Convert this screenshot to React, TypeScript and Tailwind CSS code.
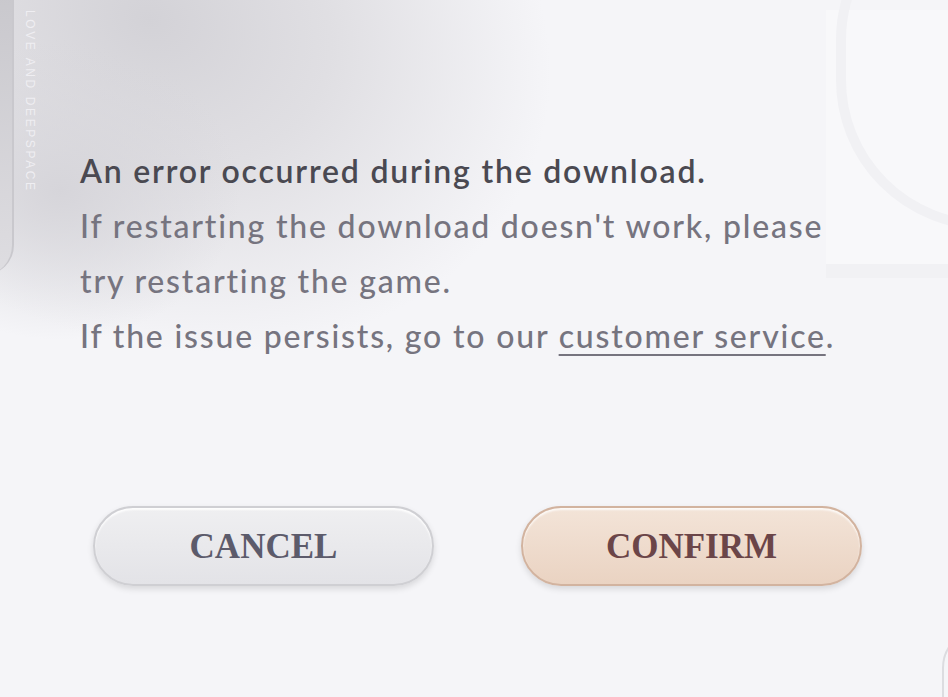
import React from "react";

function Backdrop() {
  return (
    <div className="pointer-events-none absolute inset-0 overflow-hidden">
      {/* soft grey haze from the top-left */}
      <div className="absolute -left-[260px] -top-[300px] h-[640px] w-[820px] rotate-[20deg] rounded-full bg-[radial-gradient(closest-side,#d3d2d7_0%,#e0dfe3_45%,rgba(245,245,248,0)_100%)]" />
      <div className="absolute -left-[120px] top-[40px] h-[300px] w-[360px] rounded-full bg-[radial-gradient(closest-side,#d6d5da_0%,rgba(245,245,248,0)_100%)]" />
      {/* left side panel */}
      <div className="absolute -left-[30px] -top-[20px] h-[295px] w-[44px] rounded-br-[30px] border-r-2 border-[#c9c8cd] bg-gradient-to-b from-[#c8c7cc] to-[#dedde1]" />
      <div className="absolute left-[21px] top-[10px] font-['Liberation_Sans',sans-serif] text-[12px] tracking-[2.6px] text-[#efeef2] [writing-mode:vertical-rl]">
        LOVE AND DEEPSPACE
      </div>
      {/* right ring */}
      <div className="absolute left-[826px] top-[10px] h-[268px] w-[140px] bg-[#f8f8fa]" />
      <div className="absolute left-[836px] -top-[110px] h-[340px] w-[300px] rounded-full border-[10px] border-[#f1f1f4]" />
      <div className="absolute left-[826px] top-[264px] h-[14px] w-[130px] bg-[#f1f1f4]" />
      {/* bottom right arc */}
      <div className="absolute left-[942px] top-[628px] h-[120px] w-[80px] rounded-full border-2 border-[#dcdce0]" />
    </div>
  );
}

export default function App() {
  return (
    <div className="relative h-[697px] w-[948px] overflow-hidden bg-[#f5f5f8]">
      <Backdrop />
      <div className="relative flex h-full flex-col px-[80px] pt-[143px] font-['Lato',sans-serif] text-[32px] leading-[55px] tracking-[1.8px] [font-variant-ligatures:none]">
        <div className="font-semibold text-[#4a4951]">An error occurred during the download.</div>
        <div className="font-medium text-[#76747f]">
          If restarting the download doesn't work, please
          <br />
          try restarting the game.
          <br />
          If the issue persists, go to our{" "}
          <span className="underline decoration-2 underline-offset-[6px]">customer service</span>.
        </div>

        <div className="mt-[143px] flex gap-[87px] pl-[13px] tracking-normal">
          <button className="flex h-[80px] w-[341px] items-center justify-center rounded-full border-2 border-[#cfcfd3] bg-gradient-to-b from-[#efeff1] to-[#e3e3e7] shadow-[0_3px_6px_rgba(0,0,0,0.12),inset_0_2px_2px_rgba(255,255,255,0.9)]">
            <span className="font-['Liberation_Serif',serif] text-[35px] font-bold text-[#5c5b6b]">CANCEL</span>
          </button>
          <button className="flex h-[80px] w-[341px] items-center justify-center rounded-full border-2 border-[#d2b39f] bg-gradient-to-b from-[#f3e4d8] to-[#ead3c2] shadow-[0_3px_6px_rgba(0,0,0,0.12),inset_0_2px_2px_rgba(255,255,255,0.8)]">
            <span className="font-['Liberation_Serif',serif] text-[35px] font-bold text-[#6b4548]">CONFIRM</span>
          </button>
        </div>
      </div>
    </div>
  );
}
